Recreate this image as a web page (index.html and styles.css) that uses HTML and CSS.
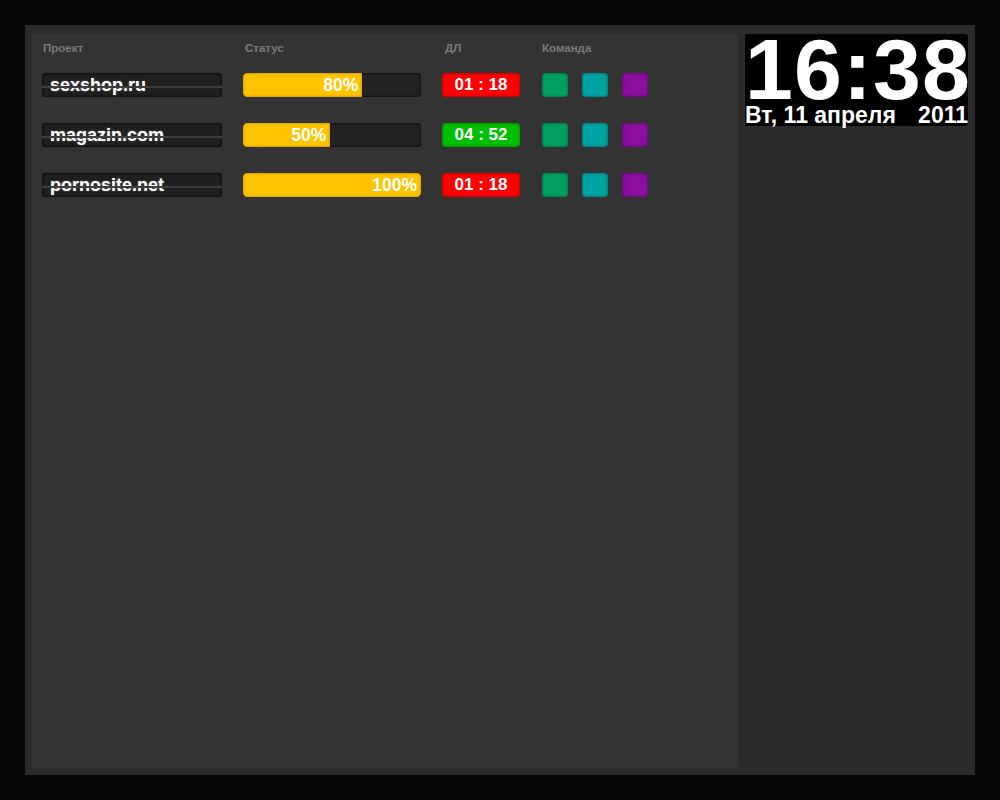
FILE: index.html
```html
<!DOCTYPE html>
<html lang="ru">
<head>
<meta charset="utf-8">
<title>Проекты</title>
<link rel="stylesheet" href="styles.css">
</head>
<body>
<div class="frame">
  <div class="panel">
    <div class="grid head">
      <div class="h1">Проект</div>
      <div class="h2">Статус</div>
      <div class="h3">ДЛ</div>
      <div class="h4">Команда</div>
    </div>
    <div class="rows">
      <div class="grid row">
        <div class="field">sexshop.ru</div>
        <div class="bar"><div class="fill" style="width:67%">80%</div></div>
        <div class="dl red">01 : 18</div>
        <div class="team"><span class="sq c1"></span><span class="sq c2"></span><span class="sq c3"></span></div>
      </div>
      <div class="grid row">
        <div class="field">magazin.com</div>
        <div class="bar"><div class="fill" style="width:49%">50%</div></div>
        <div class="dl green">04 : 52</div>
        <div class="team"><span class="sq c1"></span><span class="sq c2"></span><span class="sq c3"></span></div>
      </div>
      <div class="grid row">
        <div class="field">pornosite.net</div>
        <div class="bar"><div class="fill full" style="width:100%">100%</div></div>
        <div class="dl red">01 : 18</div>
        <div class="team"><span class="sq c1"></span><span class="sq c2"></span><span class="sq c3"></span></div>
      </div>
    </div>
  </div>
  <div class="side">
    <div class="clock">
      <div class="time">16:38</div>
      <div class="date"><span>Вт, 11 апреля</span><span>2011</span></div>
    </div>
  </div>
</div>
</body>
</html>
```
FILE: styles.css
```css
html, body {
  margin: 0;
  padding: 0;
  background: #070707;
  font-family: "Liberation Sans", Arial, sans-serif;
}
.frame {
  margin: 25px;
  width: 950px;
  height: 750px;
  box-sizing: border-box;
  background: #2b2b2b;
  padding: 9px 7px 7px 7px;
  display: flex;
  gap: 7px;
}
.panel {
  width: 706px;
  background: #333333;
  border-radius: 3px;
  box-sizing: border-box;
}
.grid {
  display: grid;
  grid-template-columns: 201px 199px 100px auto;
  padding-left: 10px;
}
.head {
  height: 28px;
  border-bottom: 1px solid #2d2d2d;
  box-shadow: 0 1px 0 #383838;
  align-items: center;
  font-size: 11.5px;
  font-weight: bold;
  color: #7a7a7a;
}
.h1 { padding-left: 1px; }
.h2 { padding-left: 2px; }
.h3 { padding-left: 3px; }
.rows {
  margin-top: 10px;
  display: flex;
  flex-direction: column;
  gap: 26px;
}
.row {
  height: 24px;
}
.field {
  position: relative;
  width: 180px;
  height: 24px;
  box-sizing: border-box;
  background: #1f1f1f;
  border-radius: 4px;
  box-shadow: inset 0 0 3px #000, 0 0 1px #111;
  color: #fff;
  font-weight: bold;
  font-size: 18px;
  line-height: 24px;
  padding-left: 8px;
  text-shadow: 0 0 2px rgba(255,255,255,0.35);
}
.field::after {
  content: "";
  position: absolute;
  left: 0;
  right: 0;
  top: 13px;
  height: 2px;
  background: #3d3d3d;
}
.bar {
  width: 178px;
  height: 24px;
  background: #222;
  border-radius: 4px;
  box-shadow: inset 0 0 3px #000;
  overflow: hidden;
}
.fill {
  height: 24px;
  box-sizing: border-box;
  background: #ffc400;
  box-shadow: inset 0 0 3px #a87a00;
  border-radius: 4px 0 0 4px;
  color: #fff;
  font-weight: bold;
  font-size: 17.5px;
  line-height: 24px;
  text-align: right;
  padding-right: 4px;
}
.fill.full { border-radius: 4px; }
.dl {
  width: 78px;
  height: 24px;
  border-radius: 4px;
  color: #fff;
  font-weight: bold;
  font-size: 17px;
  line-height: 24px;
  text-align: center;
}
.red { background: #ff0000; box-shadow: inset 0 0 3px #900; }
.green { background: #00c000; box-shadow: inset 0 0 3px #060; }
.team {
  display: flex;
  gap: 14px;
}
.sq {
  width: 26px;
  height: 24px;
  border-radius: 4px;
}
.c1 { background: #00a062; box-shadow: inset 0 0 3px #005c36; }
.c2 { background: #00a3a3; box-shadow: inset 0 0 3px #005a5a; }
.c3 { background: #8c0fa0; box-shadow: inset 0 0 3px #4c0058; }
.side {
  width: 223px;
}
.clock {
  height: 92px;
  background: #000;
  border-radius: 0 3px 3px 0;
  color: #fff;
  font-weight: bold;
}
.time {
  font-size: 86px;
  line-height: 70px;
  letter-spacing: 1.2px;
  white-space: nowrap;
}
.date {
  display: flex;
  justify-content: space-between;
  font-size: 23px;
  line-height: 21px;
  padding-top: 1px;
  white-space: nowrap;
}
```
